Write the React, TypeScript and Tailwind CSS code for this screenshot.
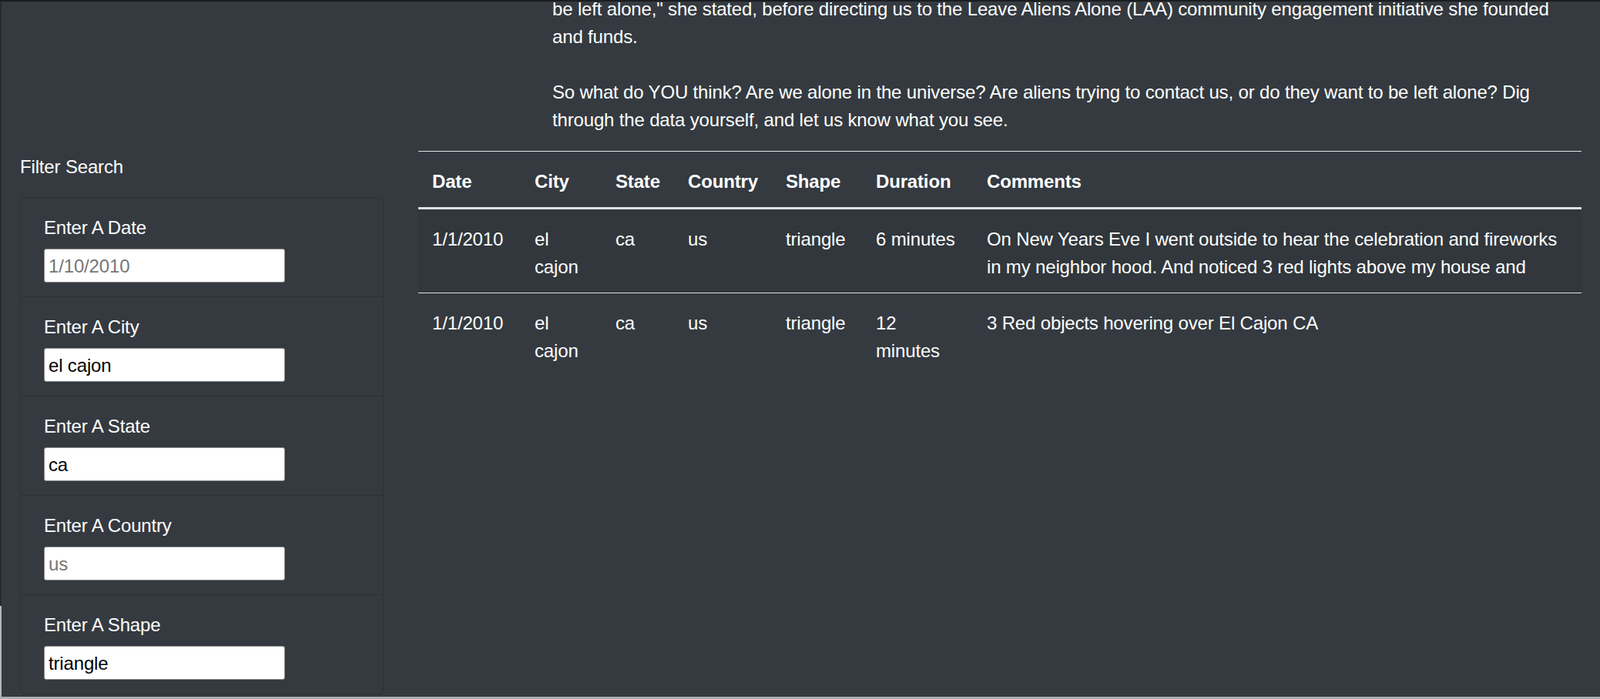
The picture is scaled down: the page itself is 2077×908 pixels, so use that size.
import React from "react";

type Sighting = {
  date: string;
  city: string;
  state: string;
  country: string;
  shape: string;
  duration: string;
  comments: string;
};

const sightings: Sighting[] = [
  {
    date: "1/1/2010",
    city: "el cajon",
    state: "ca",
    country: "us",
    shape: "triangle",
    duration: "6 minutes",
    comments:
      "On New Years Eve I went outside to hear the celebration and fireworks in my neighbor hood. And noticed 3 red lights above my house and",
  },
  {
    date: "1/1/2010",
    city: "el cajon",
    state: "ca",
    country: "us",
    shape: "triangle",
    duration: "12 minutes",
    comments: "3 Red objects hovering over El Cajon CA",
  },
];

const filters = [
  { label: "Enter A Date", value: "", placeholder: "1/10/2010" },
  { label: "Enter A City", value: "el cajon", placeholder: "" },
  { label: "Enter A State", value: "ca", placeholder: "" },
  { label: "Enter A Country", value: "", placeholder: "us" },
  { label: "Enter A Shape", value: "triangle", placeholder: "" },
];

const headers = [
  { name: "Date", width: "w-[133px]" },
  { name: "City", width: "w-[105px]" },
  { name: "State", width: "w-[94px]" },
  { name: "Country", width: "w-[127px]" },
  { name: "Shape", width: "w-[117px]" },
  { name: "Duration", width: "w-[144px]" },
  { name: "Comments", width: "w-[790px]" },
];

// cells keep bootstrap's 18px padding, text nudged down to sit like the original font
const cell = "px-[18px] pt-[21px] pb-[15px] align-top border-t border-[#dee2e6]";

function FilterItem({ label, value, placeholder }: { label: string; value: string; placeholder: string }) {
  return (
    <li className="px-[30px] py-[18px] border-b-[1.5px] border-[#2c3136] last:border-b-0">
      <label className="block pt-[3px] mb-[9px]">{label}</label>
      <input
        className="block w-[313px] h-[44px] px-[5px] pt-[2px] bg-white text-black border-[1.5px] border-[#8a8a8a] rounded-[3px] placeholder:text-[#767676] focus:outline-none"
        defaultValue={value}
        placeholder={placeholder}
      />
    </li>
  );
}

export default function App() {
  return (
    <div className="w-[2077px] h-[908px] flex flex-col overflow-hidden bg-[#343a40] text-white text-[24px] leading-[36px] tracking-[-0.16px] font-['Liberation_Sans',Arial,sans-serif]">
      <div className="h-[2px] bg-[#1b1d20]" />

      <div className="flex flex-1 min-h-0">
        {/* sliver of the window behind */}
        <div className="w-[2px] flex flex-col">
          <div className="h-[785px] bg-[#272b30]" />
          <div className="flex-1 bg-[#b3b7bd]" />
        </div>

        <div className="flex-1 flex flex-col">
          <p className="-mt-[8px] mb-[22px] pl-[715px] pr-[24px] whitespace-nowrap">
            be left alone," she stated, before directing us to the Leave Aliens Alone (LAA) community engagement initiative she founded
            <br />
            and funds.
            <br />
            <br />
            So what do YOU think? Are we alone in the universe? Are aliens trying to contact us, or do they want to be left alone? Dig
            <br />
            through the data yourself, and let us know what you see.
          </p>

          <div className="flex">
            <aside className="w-[519px] shrink-0 pl-[24px] pr-[23px]">
              <p className="pt-[3px] mb-[21px]">Filter Search</p>
              <ul className="border-[1.5px] border-[#2c3136] rounded-[6px]">
                {filters.map((f) => (
                  <FilterItem key={f.label} {...f} />
                ))}
              </ul>
            </aside>

            <main className="flex-1 pl-[22px] pr-[24px]">
              <table className="w-full table-fixed border-collapse text-left">
                <thead>
                  <tr>
                    {headers.map((h) => (
                      <th
                        key={h.name}
                        className={`${h.width} px-[18px] pt-[21px] pb-[15px] font-bold whitespace-nowrap align-bottom border-t border-b-[3px] border-t-[#dee2e6] border-b-[#dee2e6]`}
                      >
                        {h.name}
                      </th>
                    ))}
                  </tr>
                </thead>
                <tbody>
                  {sightings.map((s, i) => (
                    <tr key={i} className={i % 2 === 0 ? "bg-black/5" : ""}>
                      <td className={cell}>{s.date}</td>
                      <td className={cell}>{s.city}</td>
                      <td className={cell}>{s.state}</td>
                      <td className={cell}>{s.country}</td>
                      <td className={cell}>{s.shape}</td>
                      <td className={cell}>{s.duration}</td>
                      <td className={cell}>
                        <div className="h-[72px] overflow-hidden">{s.comments}</div>
                      </td>
                    </tr>
                  ))}
                </tbody>
              </table>
            </main>
          </div>
        </div>
      </div>

      <div className="h-[3px] shrink-0 bg-[#a9adb4]" />
    </div>
  );
}
